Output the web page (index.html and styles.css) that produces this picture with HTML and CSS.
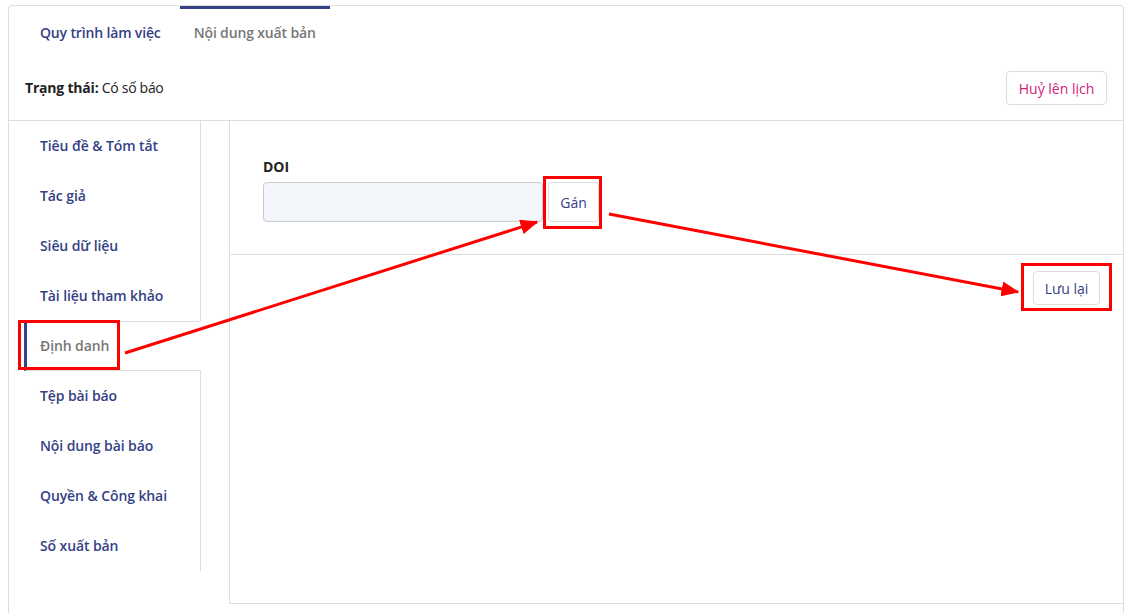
FILE: index.html
```html
<!DOCTYPE html>
<html lang="vi">
<head>
<meta charset="utf-8">
<title>Nội dung xuất bản</title>
<link rel="stylesheet" href="styles.css">
</head>
<body>
<div class="card">
  <div class="tabs">
    <div class="tab">Quy trình làm việc</div>
    <div class="tab active">Nội dung xuất bản</div>
  </div>
  <div class="status-row">
    <div class="status"><b>Trạng thái:</b> Có số báo</div>
    <button class="btn btn-danger">Huỷ lên lịch</button>
  </div>
  <div class="body">
    <ul class="sidebar">
      <li class="item">Tiêu đề &amp; Tóm tắt</li>
      <li class="item">Tác giả</li>
      <li class="item">Siêu dữ liệu</li>
      <li class="item">Tài liệu tham khảo</li>
      <li class="item active">Định danh</li>
      <li class="item">Tệp bài báo</li>
      <li class="item">Nội dung bài báo</li>
      <li class="item">Quyền &amp; Công khai</li>
      <li class="item">Số xuất bản</li>
    </ul>
    <div class="panel">
      <div class="section">
        <label class="label">DOI</label>
        <div class="field-row">
          <input class="input" type="text">
          <button class="btn btn-assign">Gán</button>
        </div>
      </div>
      <div class="footer">
        <button class="btn btn-save">Lưu lại</button>
      </div>
    </div>
  </div>
</div>
<svg class="annot" width="1127" height="613" viewBox="0 0 1127 613">
  <defs>
    <marker id="ah" markerWidth="6" markerHeight="5" refX="5.5" refY="2.5" orient="auto" markerUnits="strokeWidth">
      <path d="M0,0 L6,2.5 L0,5 z" fill="#f00"/>
    </marker>
  </defs>
  <g fill="none" stroke="#f00" stroke-width="3">
    <rect x="19.5" y="321.5" width="99" height="47"/>
    <rect x="544.5" y="177.5" width="56" height="50"/>
    <rect x="1022.5" y="264.5" width="88" height="45"/>
    <line x1="125" y1="353" x2="537" y2="222" marker-end="url(#ah)"/>
    <line x1="609" y1="214" x2="1018" y2="292" marker-end="url(#ah)"/>
  </g>
</svg>
</body>
</html>
```
FILE: styles.css
```css
* { box-sizing: border-box; }
html, body { margin: 0; padding: 0; background: #fff; }
body {
  font-family: "Open Sans", "Noto Sans", sans-serif;
  font-size: 14px;
  color: #222;
  overflow: hidden;
  height: 613px;
  position: relative;
}
.card {
  margin: 5px 3px 0 8px;
  border: 1px solid #ddd;
  border-radius: 4px;
  height: 640px;
}
.tabs {
  display: flex;
  padding-left: 17px;
  height: 52px;
}
.tab {
  padding: 14px 14px 0;
  border-top: 3px solid transparent;
  font-weight: 600;
  letter-spacing: -0.15px;
  color: #343f85;
  line-height: 20px;
}
.tab.active {
  margin-left: 5px;
  border-top-color: #36418a;
  color: #777;
}
.status-row {
  display: flex;
  justify-content: space-between;
  align-items: center;
  padding: 13px 16px 15px;
  border-bottom: 1px solid #ddd;
}
.status {
  line-height: 20px;
  letter-spacing: -0.3px;
}
.status b { font-weight: 700; letter-spacing: -0.2px; }
.btn {
  font-family: inherit;
  font-size: 14px;
  background: #fff;
  border: 1px solid #ddd;
  border-radius: 4px;
  cursor: pointer;
}
.btn-danger {
  height: 34px;
  width: 101px;
  padding: 0;
  color: #d2237a;
  font-weight: 500;
}
.body {
  display: flex;
  align-items: flex-start;
}
.sidebar {
  list-style: none;
  margin: 0;
  padding: 0 0 0 15px;
  width: 192px;
  border-right: 1px solid #ddd;
  flex-shrink: 0;
}
.item {
  height: 50px;
  line-height: 48px;
  padding-left: 13px;
  border-left: 3px solid transparent;
  border-top: 1px solid transparent;
  border-bottom: 1px solid transparent;
  font-weight: 600;
  letter-spacing: -0.1px;
  color: #343f85;
  white-space: nowrap;
}
.item.active {
  border-left-color: #36418a;
  border-top-color: #ddd;
  border-bottom-color: #ddd;
  background: #fff;
  margin-right: -1px;
  color: #777;
  position: relative;
}
.panel {
  flex: 1;
  margin-left: 28px;
  margin-right: -1px;
  height: 483px;
  border-left: 1px solid #ddd;
  border-right: 1px solid #ddd;
  border-bottom: 1px solid #ddd;
}
.section {
  padding: 36px 33px 32px;
  border-bottom: 1px solid #ddd;
}
.label {
  display: block;
  font-weight: 700;
  line-height: 20px;
  margin-bottom: 5px;
  color: #222;
}
.field-row {
  display: flex;
  gap: 5px;
}
.input {
  width: 280px;
  height: 40px;
  background: #f3f6fa;
  border: 1px solid #c9cbcf;
  border-radius: 4px;
  outline: none;
}
.btn-assign {
  width: 51px;
  height: 40px;
  color: #343f85;
  font-weight: 500;
}
.footer {
  display: flex;
  justify-content: flex-end;
  padding: 16px 23px;
}
.btn-save {
  height: 34px;
  width: 67px;
  color: #343f85;
  font-weight: 500;
}
.annot {
  position: absolute;
  left: 0;
  top: 0;
  pointer-events: none;
}
```
